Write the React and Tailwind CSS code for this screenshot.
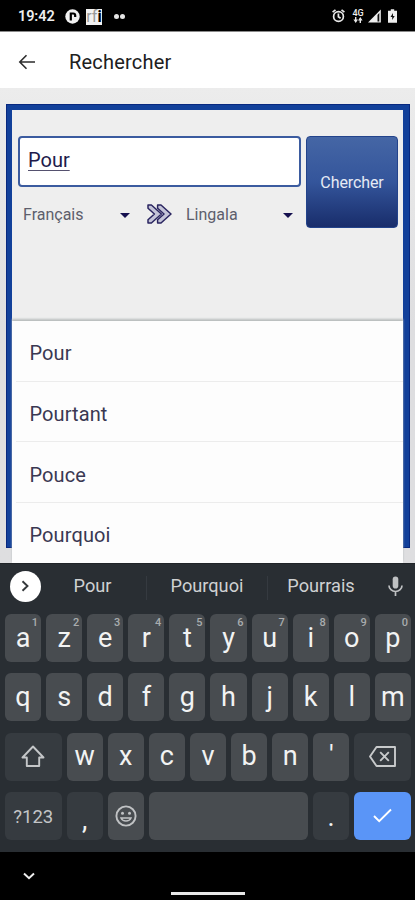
import React, { useState } from "react";

const suggestions = ["Pour", "Pourtant", "Pouce", "Pourquoi"];
const topRow = ["a", "z", "e", "r", "t", "y", "u", "i", "o", "p"];
const homeRow = ["q", "s", "d", "f", "g", "h", "j", "k", "l", "m"];
const bottomRow = ["w", "x", "c", "v", "b", "n", "'"];

const StatusBar = () => (
    <div className="h-8 shrink-0 bg-black border-b border-[#8a8a8a] flex items-center justify-between pl-[18px] pr-[18px] text-[#eeeeee]">
        <div className="flex items-center pt-0.5">
            <span className="w-[37px] text-[14.5px] leading-4 font-semibold tracking-[-0.1px]">19:42</span>
            <svg className="ml-[10px]" width="15" height="15" viewBox="0 0 15 15">
                <circle cx="7.5" cy="7.5" r="7.2" fill="#f2f2f2" />
                <path d="M5.800 11.500V4.500h2.400q2 0 2 2v1.500" fill="none" stroke="#000" strokeWidth="2.200" />
            </svg>
            <span className="ml-[6px] w-4 h-4 bg-[#f2f2f2] flex items-center justify-center text-[16px] leading-4 text-[#999999]">
                rf<b className="text-black">i</b>
            </span>
            <span className="ml-3 size-[5px] rounded-full bg-[#e5e5e5]" />
            <span className="ml-[1px] size-[5px] rounded-full bg-[#e5e5e5]" />
        </div>
        <div className="flex items-center pt-px">
            <svg width="13" height="14" viewBox="0 0 13 14" fill="none" stroke="#e8e8e8" strokeWidth="1.700">
                <circle cx="6.5" cy="7.5" r="4.9" />
                <path d="M.6 3.2 3.5.8M12.4 3.2 9.5.8M6.4 4.6v3.2l2.2 1.5" />
            </svg>
            <div className="ml-[7px] w-[12px] flex flex-col items-center">
                <span className="text-[9px] leading-[8px] font-medium">4G</span>
                <svg width="10" height="6" viewBox="0 0 10 6" fill="#e8e8e8">
                    <path d="M2 0h1.4v2.5H5L2.700 6 .4 2.500H2zM6.600 6H8V3.500h1.600L7.300 0 5 3.500h1.600z" />
                </svg>
            </div>
            <svg className="ml-[4px]" width="13" height="14" viewBox="0 0 13 14">
                <path d="M0 13.500 12.800.5v13z" fill="#eeeeee" />
                <path d="M9.500 6v6.500h1.800V4z" fill="#111" />
            </svg>
            <svg className="ml-[7px]" width="9" height="14" viewBox="0 0 9 14">
                <path d="M2.800.300h3.400v1.500H9V13.700H0V1.800h2.800z" fill="#eeeeee" />
                <path d="M5 4 2.500 8h1.700v3L6.700 7H5z" fill="#111" />
            </svg>
        </div>
    </div>
);

const AppBar = () => (
    <header className="h-14 shrink-0 bg-white flex items-center pl-[18px] pt-[3px]">
        <svg width="18" height="16" viewBox="0 0 18 16" fill="none" stroke="#2d2d2d" strokeWidth="1.6">
            <path d="M17 8H2M8.500 1.200 1.800 8l6.700 6.800" />
        </svg>
        <h1 className="ml-[33px] text-[20px] leading-6 font-[450] tracking-[0.2px] text-[#202020]">Rechercher</h1>
    </header>
);

const Caret = () => (
    <svg width="10" height="5" viewBox="0 0 10 5" fill="#15104f">
        <path d="M0 0h10L5 5z" />
    </svg>
);

const SearchPanel = ({ query, setQuery }) => (
    <div className="h-[444px] w-[404px] border-6 border-r-7 border-[#12409a] outline-1 -outline-offset-1 outline-[#08287f] bg-[#eeeeee]">
        <div className="flex gap-[5px] pl-[6px] pt-[26px]">
            <div className="w-[283px]">
                <input
                    type="text"
                    value={query}
                    onChange={(e) => setQuery(e.target.value)}
                    className="block w-full h-[51px] rounded-[4px] border-2 border-[#3b5b9f] bg-white pl-2 pb-[4px] text-[20px] text-[#211b4b] underline decoration-1 underline-offset-[3px] decoration-[#55516f] outline-none"
                />
                <div className="mt-4 h-6 flex items-center text-[16px] text-[#5d5e6c]">
                    <span className="ml-[5px] w-[97px]">Français</span>
                    <Caret />
                    <svg className="ml-[17px] mt-[-3px]" width="25" height="20" viewBox="0 0 25 20" fill="#c4c4d8" stroke="#2a2560" strokeWidth="1.500" strokeLinejoin="round">
                        <path d="M1 1h3.400l10 9-10 9H1v-3.200L7.400 10 1 4.200z" />
                        <path d="M10.600 1H14l10 9-10 9h-3.400v-3.200L17 10l-6.400-5.800z" />
                    </svg>
                    <span className="ml-[14px] w-[97px]">Lingala</span>
                    <Caret />
                </div>
            </div>
            <button className="w-[92px] h-[92px] rounded-[4px] border border-[#23438b] bg-linear-to-b from-[#4566a5] via-[#34559b] to-[#192d6b] text-[16px] tracking-[-0.1px] text-[#e6eaf4] pt-[2px]">
                Chercher
            </button>
        </div>
    </div>
);

const SuggestionList = ({ onPick }) => (
    <ul className="absolute left-[12px] top-[233px] w-[391px] h-[242px] overflow-hidden bg-[#fdfdfd] shadow-[0_-2px_2px_#b9bdbd]">
        {suggestions.map((word) => (
            <li
                key={word}
                onClick={() => onPick(word)}
                className="ml-1 h-[60.700px] border-b border-[#ececec] pl-[13.500px] pt-[5px] flex items-center text-[20px] tracking-[0.1px] text-[#3a3852]"
            >
                {word}
            </li>
        ))}
    </ul>
);

const Key = ({ label, hint, dark, className = "", onClick }) => (
    <button
        onClick={onClick}
        className={`relative w-[36.100px] h-12 rounded-[6px] flex items-center justify-center text-[27px] leading-none text-[#f2f3f3] ${dark ? "bg-[#363b40]" : "bg-[#484c50]"} ${className}`}
    >
        {label}
        {hint && <span className="absolute right-[3px] top-[3px] text-[11px] leading-none font-medium text-[#a9acae]">{hint}</span>}
    </button>
);

const Keyboard = ({ type, erase, pick }) => (
    <div className="h-[289px] shrink-0 bg-[#292e33] border-t border-[#202428] relative">
        <div className="h-[50px] flex items-center text-[18.200px] text-[#cfd1d2]">
            <button className="mt-[-6px] ml-[10px] size-[31px] shrink-0 rounded-full bg-white flex items-center justify-center">
                <svg width="9" height="14" viewBox="0 0 9 14" fill="none" stroke="#34383b" strokeWidth="1.900">
                    <path d="m1.500 2.200 5 4.800-5 4.800" />
                </svg>
            </button>
            <button onClick={() => pick("Pour")} className="w-[106px] h-6 pr-[2px] pb-1 mt-[-2px] leading-5 border-r border-[#353a40]">Pour</button>
            <button onClick={() => pick("Pourquoi")} className="w-[121px] h-6 pb-1 mt-[-2px] leading-5 border-r border-[#353a40]">Pourquoi</button>
            <button onClick={() => pick("Pourrais")} className="w-[106px] h-6 pb-1 mt-[-2px] leading-5">Pourrais</button>
            <svg className="ml-[14px] mt-[-5px]" width="15" height="21" viewBox="0 0 15 21" fill="none" stroke="#bfc1c3" strokeWidth="1.700">
                <rect x="4.700" y=".5" width="5.600" height="12" rx="2.800" fill="#bfc1c3" stroke="none" />
                <path d="M1 9.500a6.500 6 0 0 0 13 0M7.500 15.500V20" />
            </svg>
        </div>
        <div className="flex flex-col gap-[11.300px] pl-[5px] pr-[4px]">
            <div className="flex justify-between">
                {topRow.map((k, i) => (
                    <Key key={k} label={k} hint={String((i + 1) % 10)} onClick={() => type(k)} />
                ))}
            </div>
            <div className="flex justify-between">
                {homeRow.map((k) => (
                    <Key key={k} label={k} onClick={() => type(k)} />
                ))}
            </div>
            <div className="flex gap-[5px]">
                <Key
                    dark
                    className="flex-1"
                    label={
                        <svg width="24" height="23" viewBox="0 0 24 23" fill="none" stroke="#c4c6c8" strokeWidth="1.900" strokeLinejoin="round">
                            <path d="M12 1.500 1.500 12.500h4.300V21h12.400v-8.500h4.300z" />
                        </svg>
                    }
                />
                {bottomRow.map((k) => (
                    <Key key={k} label={k} onClick={() => type(k)} />
                ))}
                <Key
                    dark
                    className="flex-1"
                    onClick={erase}
                    label={
                        <svg width="27" height="21" viewBox="0 0 27 21" fill="none" stroke="#c8cacb" strokeWidth="1.900" strokeLinejoin="round">
                            <path d="M7.500 1H26v19H7.500L1 10.500zM11.200 6.200l8.600 8.600M19.800 6.200l-8.600 8.600" />
                        </svg>
                    }
                />
            </div>
            <div className="flex gap-[5px]">
                <Key dark className="w-[56.600px] pt-[2px]" label={<span className="text-[18.500px] text-[#c3c5c7]">?123</span>} />
                <Key dark className="pt-[10px]" label="," onClick={() => type(",")} />
                <Key
                    label={
                        <svg width="22" height="22" viewBox="0 0 22 22" fill="none" stroke="#c0c2c4" strokeWidth="1.900">
                            <circle cx="11" cy="11" r="9.600" />
                            <path d="M6 13a5.300 4.500 0 0 0 10 0z" strokeWidth="1.500" />
                            <circle cx="7.500" cy="8.300" r="1.500" fill="#c0c2c4" stroke="none" />
                            <circle cx="14.500" cy="8.300" r="1.500" fill="#c0c2c4" stroke="none" />
                        </svg>
                    }
                />
                <button onClick={() => type(" ")} className="flex-1 h-12 rounded-[6px] bg-[#484c50]" />
                <Key dark className="pt-[4px]" label="." onClick={() => type(".")} />
                <button className="w-[57px] h-12 rounded-[6px] bg-[#5a95f7] flex items-center justify-center">
                    <svg width="19" height="15" viewBox="0 0 19 15" fill="none" stroke="#ffffff" strokeWidth="1.900">
                        <path d="m1 8 5.200 5.200L18 1.500" />
                    </svg>
                </button>
            </div>
        </div>
    </div>
);

const NavBar = () => (
    <div className="h-12 shrink-0 bg-black flex items-end pl-[23px] pb-[5px]">
        <svg className="mb-[15px]" width="12" height="8" viewBox="0 0 12 8" fill="none" stroke="#eeeeee" strokeWidth="2">
            <path d="m1 1.500 5 4.700 5-4.700" />
        </svg>
        <span className="ml-[136px] w-[74px] h-[3px] bg-[#e8e8e8]" />
    </div>
);

const App = () => {
    const [query, setQuery] = useState("Pour");

    return (
        <div className="w-[415px] h-[900px] flex flex-col overflow-hidden bg-black font-['Roboto',sans-serif]">
            <StatusBar />
            <AppBar />
            <main className="relative flex-1 bg-linear-to-b from-[#ececec] via-[#dedee0] to-[#dedee0] pl-[6px] pt-4">
                <SearchPanel query={query} setQuery={setQuery} />
                {/* the dropdown hangs past the bottom of the framed panel */}
                <SuggestionList onPick={setQuery} />
            </main>
            <Keyboard
                type={(k) => setQuery((q) => q + k)}
                erase={() => setQuery((q) => q.slice(0, -1))}
                pick={setQuery}
            />
            <NavBar />
        </div>
    );
};

export default App;
